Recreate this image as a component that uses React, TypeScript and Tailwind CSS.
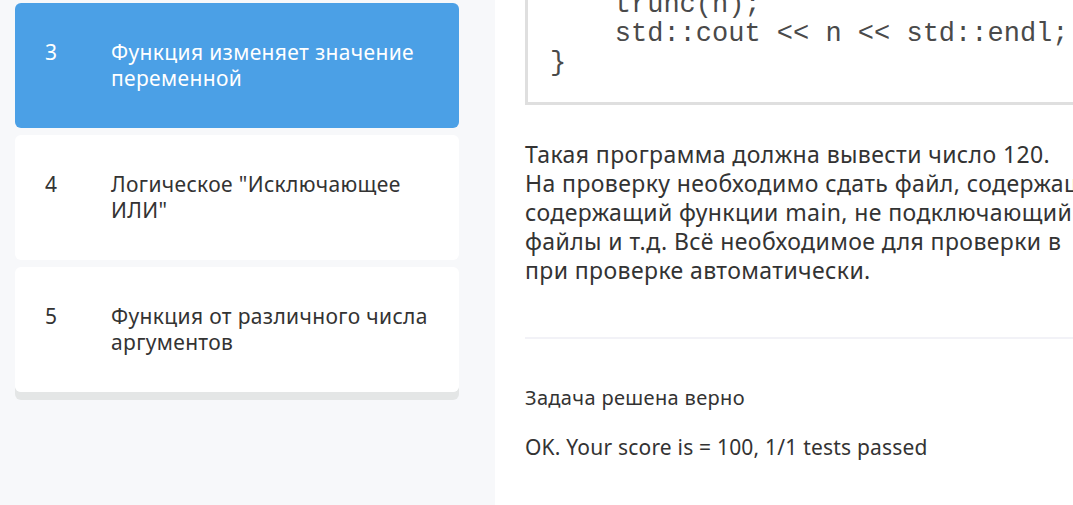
import React from "react";

const items = [
  { n: 3, title: "Функция изменяет значение переменной", active: true },
  { n: 4, title: "Логическое \"Исключающее ИЛИ\"", active: false },
  { n: 5, title: "Функция от различного числа аргументов", active: false },
];

const para = [
  "Такая программа должна вывести число 120.",
  "На проверку необходимо сдать файл, содержащий реализацию функции, не",
  "содержащий функции main, не подключающий заголовочные",
  "файлы и т.д. Всё необходимое для проверки в",
  "при проверке автоматически.",
];

export default function App() {
  return (
    <div
      className="flex w-[1073px] h-[505px] overflow-hidden bg-white text-[#333333]"
      style={{ fontFamily: '"Noto Sans", "Open Sans", sans-serif' }}
    >
      <div className="w-[495px] shrink-0 bg-[#f7f8fa] pl-[15px] pr-[36px] pt-[3px]">
        <div className="flex flex-col gap-[7px] rounded-[6px] shadow-[0_8px_0_#e4e6e6]">
          {items.map((it) => (
            <div
              key={it.n}
              className={
                it.active
                  ? "flex h-[125px] rounded-[6px] bg-[#4ba0e6] pl-[30px] pr-[20px] pt-[36px] text-white"
                  : "flex h-[125px] rounded-[6px] bg-white pl-[30px] pr-[20px] pt-[36px] text-[#333333]"
              }
            >
              <div className="w-[66px] shrink-0 text-[21px] leading-[26px]">{it.n}</div>
              <div className="text-[21px] leading-[26px] tracking-[0.35px]">{it.title}</div>
            </div>
          ))}
        </div>
      </div>
      <div className="flex-1 min-w-0 overflow-hidden pl-[30px]">
        <div className="mt-[-38px] w-[700px] border-l-[3px] border-b-[3px] border-[#dfdfdf] pb-[24px] pl-[22px]">
          <pre
            className="text-[27px] leading-[29px] text-[#4a4a4a]"
            style={{ fontFamily: '"Liberation Mono", "Courier New", monospace' }}
          >
{`    long long n = 120;
    trunc(n);
    std::cout << n << std::endl;
}`}
          </pre>
        </div>
        <div className="mt-[35px] text-[23px] leading-[29px] tracking-[0.4px]">
          {para.map((l, i) => (
            <div key={i} className="whitespace-nowrap">{l}</div>
          ))}
        </div>
        <div className="mt-[52px] h-[2px] w-[700px] bg-[#f2f2f7]" />
        <div className="mt-[46px] text-[20px] leading-[26px] tracking-[0.35px]">Задача решена верно</div>
        <div className="mt-[23px] text-[21px] leading-[26px] tracking-[0.2px]">OK. Your score is = 100, 1/1 tests passed</div>
      </div>
    </div>
  );
}
